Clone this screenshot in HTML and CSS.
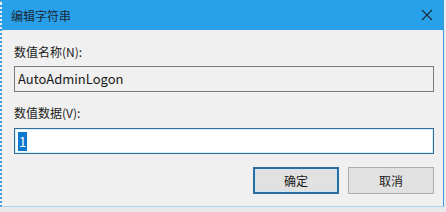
FILE: index.html
```html
<!DOCTYPE html>
<html lang="zh-CN">
<head>
    <meta charset="UTF-8">
    <title>编辑字符串</title>
    <link rel="stylesheet" href="styles.css">
</head>
<body>
    <div class="window">
        <div class="titlebar">
            <span class="title">编辑字符串</span>
            <span class="close">
                <svg width="12" height="12" viewBox="0 0 12 12"><path d="M1 1 L11 11 M11 1 L1 11" stroke="#1a2a3a" stroke-width="1.1" fill="none"/></svg>
            </span>
        </div>
        <div class="content">
            <div class="label">数值名称(N):</div>
            <div class="field readonly">AutoAdminLogon</div>
            <div class="label second">数值数据(V):</div>
            <div class="field active"><span class="selected">1</span></div>
            <div class="buttons">
                <button class="btn btn-default">确定</button>
                <button class="btn">取消</button>
            </div>
        </div>
    </div>
    <div class="below"></div>
</body>
</html>
```

FILE: styles.css
```css
body {
    margin: 0;
    width: 446px;
    height: 212px;
    background: #e8eaec;
    font-family: "Noto Sans CJK SC", "Noto Sans", sans-serif;
    font-size: 12px;
    color: #1a1a1a;
    overflow: hidden;
}
.window {
    width: 440px;
    height: 207px;
    background: #f0f0f0;
    border-left: 2px dotted #3d9bd8;
    border-right: 1px solid #3d9bd8;
    border-bottom: 1px solid #a9d2ee;
    box-sizing: border-box;
    width: 444px;
}
.titlebar {
    height: 30px;
    background: #29a0ea;
    display: flex;
    align-items: center;
    justify-content: space-between;
    padding: 0 10px 0 9px;
}
.title {
    font-size: 12px;
    color: #1b2733;
}
.close {
    display: flex;
    margin-top: -1px;
}
.content {
    padding: 14px 9px 0 12px;
}
.label {
    line-height: 16px;
    height: 16px;
}
.label.second {
    margin-top: 13px;
}
.field {
    height: 26px;
    box-sizing: border-box;
    margin-top: 6px;
    padding: 0 3px;
    line-height: 24px;
    font-size: 13px;
}
.readonly {
    border: 1px solid #7a7a7a;
    background: #f0f0f0;
}
.active {
    margin-top: 7px;
    border: 1px solid #2f6d9e;
    box-shadow: inset 0 0 0 1px #d8eefa;
    background: #fff;
    display: flex;
    align-items: center;
}
.selected {
    background: #0b78d0;
    color: #fff;
    line-height: 19px;
    padding: 0 1px;
}
.buttons {
    display: flex;
    justify-content: flex-end;
    gap: 9px;
    margin-top: 13px;
}
.btn {
    width: 86px;
    height: 27px;
    font-family: inherit;
    font-size: 12px;
    color: #1a1a1a;
    background: #e1e1e1;
    border: 1px solid #adadad;
    padding: 0;
}
.btn-default {
    border: 2px solid #2f6d9e;
    box-shadow: inset 0 0 0 1px #cde6f5;
}
```
